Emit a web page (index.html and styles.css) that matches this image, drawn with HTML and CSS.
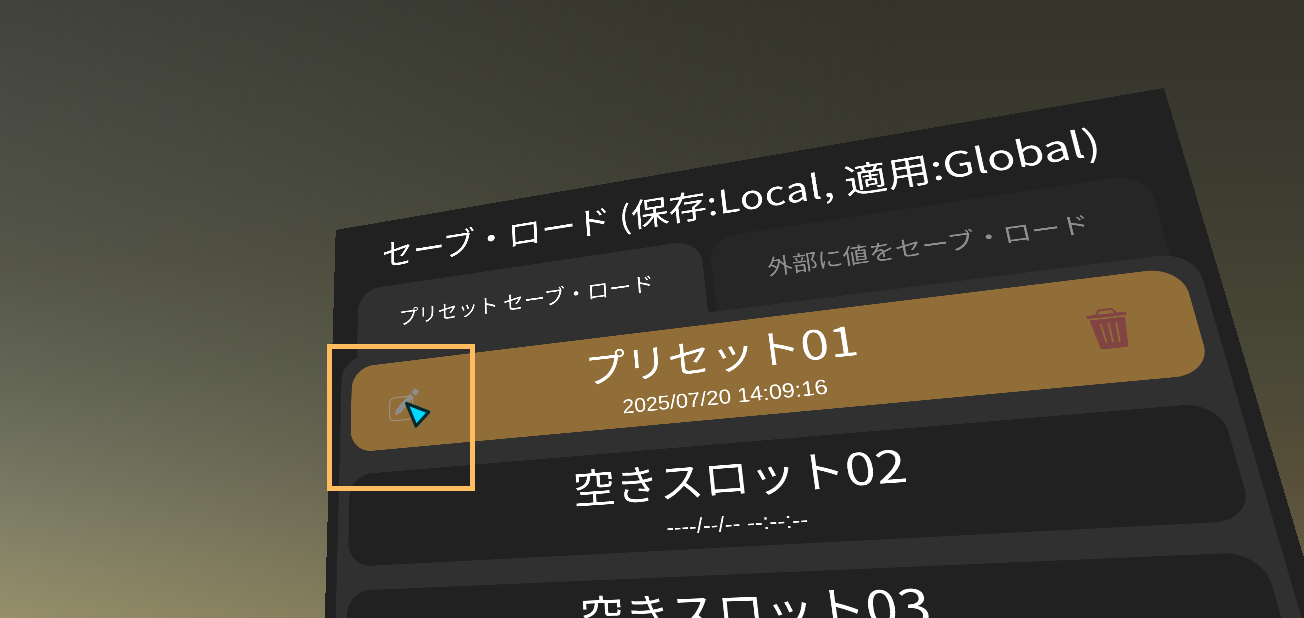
FILE: index.html
```html
<!DOCTYPE html>
<html lang="ja">
<head>
<meta charset="utf-8">
<title>セーブ・ロード</title>
<link rel="stylesheet" href="styles.css">
</head>
<body>
<main class="scene">
  <div class="sky-glow"></div>
  <div class="perspective">
  <section class="panel">
    <h1 class="panel-title"><span class="kana">セーブ・ロード</span> (保存<span class="latin">:Local, </span>適用:Global)</h1>
    <nav class="tabs">
      <div class="tab tab-active">プリセット セーブ・ロード</div>
      <div class="tab">外部に値をセーブ・ロード</div>
    </nav>
    <div class="slots">
      <article class="slot slot-filled">
        <svg class="icon-edit" viewBox="0 0 44 46">
          <rect class="edit-frame" x="1" y="13" width="32" height="32" rx="6"/>
          <path class="edit-pencil" d="M8 38 L10 29.500 L29 9.500 L35 15 L16 35 Z"/>
          <path class="edit-pencil" d="M31 7.500 L36 2.500 L42 8 L37 13 Z"/>
        </svg>
        <div class="slot-text">
          <div class="slot-name">プリセット<span class="num">01</span></div>
          <div class="slot-date">2025/07/20 14:09:16</div>
        </div>
        <svg class="icon-trash" viewBox="0 0 36 46">
          <path class="trash-handle" d="M9 6.500 L11.500 2 Q12 1.200 13 1.200 H23 Q24 1.200 24.500 2 L27 6.500"/>
          <rect x="0" y="6" width="36" height="3.800" rx="1"/>
          <path fill-rule="evenodd" d="M2 11.500 H34 L30.500 43.500 Q30.300 45.500 28.500 45.500 H7.500 Q5.700 45.500 5.500 43.500 Z M10.200 17 L11.400 39 H13 L11.800 17 Z M17.200 17 V39 H18.800 V17 Z M24.200 17 L23 39 H24.600 L25.800 17 Z"/>
        </svg>
      </article>
      <article class="slot">
        <div class="slot-text">
          <div class="slot-name">空きスロット<span class="num">02</span></div>
          <div class="slot-date">----/--/-- --:--:--</div>
        </div>
      </article>
      <article class="slot">
        <div class="slot-text">
          <div class="slot-name">空きスロット<span class="num">03</span></div>
        </div>
      </article>
    </div>
  </section>
  </div>
  <div class="highlight"></div>
  <svg class="cursor" viewBox="0 0 30 30">
    <path d="M6.600 3.400 L28.700 12.100 L16 26 Z"/>
  </svg>
</main>
</body>
</html>
```
FILE: styles.css
```css
* { box-sizing: border-box; }

body {
  margin: 0;
  overflow: hidden;
  font-family: "Noto Sans CJK JP", sans-serif;
}

.scene {
  position: relative;
  width: 1304px;
  height: 618px;
  overflow: hidden;
  background: linear-gradient(180deg, #35342b 0, #39392e 130px, #414032 250px, #4a4837 370px, #564e38 470px, #6b6346 618px);
}

.sky-glow {
  width: 100%;
  height: 100%;
  background: linear-gradient(180deg, #42433b 0, #4b4c43 130px, #555649 260px, #636555 370px, #6f715e 440px, #7f7f67 520px, #8a8768 565px, #968f6a 618px);
  -webkit-mask-image: linear-gradient(90deg, #000 0, rgba(0, 0, 0, .62) 330px, rgba(0, 0, 0, .2) 650px, transparent 900px);
  mask-image: linear-gradient(90deg, #000 0, rgba(0, 0, 0, .62) 330px, rgba(0, 0, 0, .2) 650px, transparent 900px);
}

/* The panel is a flat surface seen in perspective, laid out at twice its size for smooth edges. */
.perspective {
  position: absolute;
  left: 0;
  top: 0;
  width: 2000px;
  height: 1440px;
  transform-origin: 0 0;
  transform: matrix3d(.28175, -.081, 0, -.00011374, -.04709, .279775, 0, -.00011465, 0, 0, 1, 0, 335.7, 230, 0, 1);
}

.panel {
  zoom: 2;
  width: 1000px;
  height: 720px;
  padding: 0 15px;
  background: #212121;
  color: #fff;
}

.panel-title {
  height: 102px;
  margin: 0;
  padding-top: 5px;
  font-size: 46.500px;
  font-weight: 400;
  line-height: 92px;
  text-align: center;
  white-space: nowrap;
}

.kana { letter-spacing: -.9px; }

.latin { letter-spacing: .9px; }

.tabs {
  display: flex;
  gap: 10px;
  height: 100px;
  padding: 0 22px;
}

.tab {
  flex: 1;
  border-radius: 32px 32px 0 0;
  background: #262626;
  color: #8f8f8f;
  font-size: 27.800px;
  line-height: 98px;
  text-align: center;
  white-space: nowrap;
}

.tab-active {
  background: #303030;
  color: #fff;
}

.slots {
  display: flex;
  flex-direction: column;
  gap: 30.300px;
  height: 540px;
  padding: 15.300px 15px;
  border-radius: 32px;
  background: #303030;
}

.slot {
  display: grid;
  grid-template-columns: 44px 1fr 44px;
  align-items: center;
  flex: none;
  height: 121.200px;
  padding: 0 54px;
  border-radius: 31px;
  background: #212121;
}

.slot-filled { background: #916e37; }

.slot-text {
  grid-column: 2;
  height: 100%;
  padding-top: 6.500px;
  text-align: center;
}

.slot-name {
  height: 69px;
  font-size: 50px;
  line-height: 64px;
  white-space: nowrap;
}

.slot-filled .slot-name { margin-left: -5px; }

.num {
  display: inline-block;
  margin: 0 2px;
  transform: scaleX(1.1);
}

.slot-date {
  font-family: "Liberation Sans", sans-serif;
  font-size: 25px;
  line-height: 38px;
}

.icon-edit {
  width: 44px;
  height: 46px;
}

.edit-frame {
  fill: none;
  stroke: #9b9284;
  stroke-width: 1.500;
}

.edit-pencil { fill: #8f8d8a; }

.icon-trash {
  justify-self: center;
  width: 36px;
  height: 46px;
  fill: #824343;
}

.trash-handle {
  fill: none;
  stroke: #824343;
  stroke-width: 2.200;
}

.highlight {
  position: absolute;
  left: 327px;
  top: 344px;
  width: 148px;
  height: 147px;
  border: 5px solid #ffbd60;
}

.cursor {
  position: absolute;
  left: 400px;
  top: 400px;
  width: 30px;
  height: 30px;
  overflow: visible;
  fill: #00d9ff;
  stroke: #04282f;
  stroke-width: 3.200;
  stroke-linejoin: round;
}
```
